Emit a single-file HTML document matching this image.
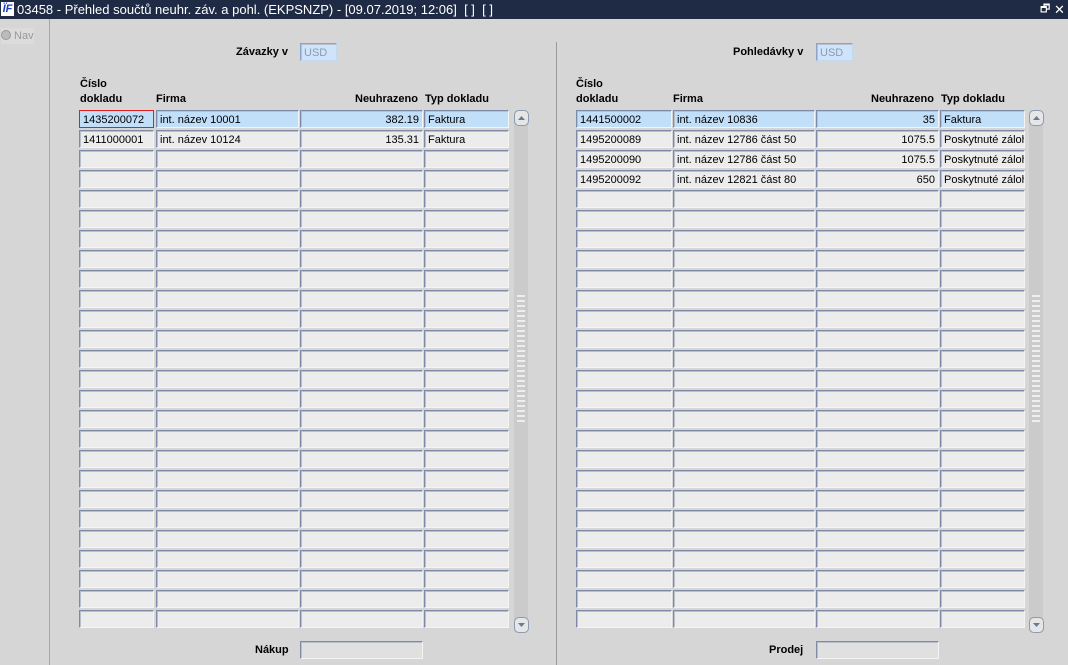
<!DOCTYPE html>
<html><head><meta charset="utf-8"><style>
body{margin:0;width:1068px;height:665px;background:#d6d6d6;font-family:"Liberation Sans",Arial,sans-serif;font-size:11px;position:relative;overflow:hidden}
.t{position:absolute;left:0;top:0;width:1068px;height:19px;background:#1f2b45;color:#fff;font-size:13px;line-height:19px}
.a{position:absolute}
.c{position:absolute;height:16px;background:#ececec;border:1px solid;border-color:#7d8ba6 #f4f4f4 #f4f4f4 #7d8ba6;box-shadow:inset 1px 1px 0 #b8c0cf;line-height:18px;padding:0 3px;box-sizing:content-box;white-space:nowrap;overflow:hidden;color:#000}
.s{background:#c2dffa}
.r{text-align:right}
.h{position:absolute;font-weight:bold;font-size:11px}
.sb{position:absolute;width:14px;background:#cbcbcb;border-radius:3px}
.sbtn{position:absolute;width:13px;height:14px;border:1px solid #8c9ab2;border-radius:5px;background:#e6e6e6;left:0}
</style></head><body>
<div class="t"><span style="position:absolute;left:1px;top:2px;width:13px;height:14px;background:#fff;color:#1a3cc0;font-weight:bold;font-style:italic;font-size:11px;line-height:14px;text-align:center">ÏF</span><span style="position:absolute;left:17px">03458 - Přehled součtů neuhr. záv. a pohl. (EKPSNZP) - [09.07.2019; 12:06]&nbsp; [ ]&nbsp; [ ]</span><span style="position:absolute;left:1040px;font-size:11px">🗗</span><span style="position:absolute;left:1054px;font-size:13px">✕</span></div>
<div class="a" style="left:0;top:19px;width:49px;height:646px;background:#d6d6d6;border-right:1px solid #a8a8a8"></div>
<div class="a" style="left:1px;top:28px;width:33px;height:16px;background:#dcdcdc;color:#999;font-size:11px;line-height:16px;white-space:nowrap"><span style="display:inline-block;width:8px;height:8px;border-radius:50%;border:1px solid #999;background:#bbb;vertical-align:-1px"></span>&nbsp;Nav</div>
<div class="a" style="left:556px;top:42px;width:1px;height:623px;background:#9a9a9a"></div>

<div class="h" style="left:236px;top:46px">Závazky v</div>
<div class="c" style="left:300px;top:43px;width:29px;color:#8a9ab8;border-color:#8fa3c8 #c0d8f0 #c0d8f0 #8fa3c8;background:#cfe4f8">USD</div>
<div class="h" style="left:733px;top:46px">Pohledávky v</div>
<div class="c" style="left:816px;top:43px;width:29px;color:#8a9ab8;border-color:#8fa3c8 #c0d8f0 #c0d8f0 #8fa3c8;background:#cfe4f8">USD</div>

<div class="h" style="left:80px;top:78px">Číslo</div>
<div class="h" style="left:80px;top:93px">dokladu</div>
<div class="h" style="left:156px;top:93px">Firma</div>
<div class="h" style="left:355px;top:93px">Neuhrazeno</div>
<div class="h" style="left:425px;top:93px">Typ dokladu</div>
<div class="h" style="left:576px;top:78px">Číslo</div>
<div class="h" style="left:576px;top:93px">dokladu</div>
<div class="h" style="left:673px;top:93px">Firma</div>
<div class="h" style="left:871px;top:93px">Neuhrazeno</div>
<div class="h" style="left:941px;top:93px">Typ dokladu</div>

<div id="g"></div>

<div class="c s" style="left:79px;top:110px;width:67px;border:1px solid #e02020;box-shadow:none">1435200072</div>
<div class="c s" style="left:156px;top:110px;width:135px">int. název 10001</div>
<div class="c s r" style="left:300px;top:110px;width:115px">382.19</div>
<div class="c s" style="left:424px;top:110px;width:77px">Faktura</div>
<div class="c" style="left:79px;top:130px;width:67px">1411000001</div>
<div class="c" style="left:156px;top:130px;width:135px">int. název 10124</div>
<div class="c r" style="left:300px;top:130px;width:115px">135.31</div>
<div class="c" style="left:424px;top:130px;width:77px">Faktura</div>

<div class="c s" style="left:576px;top:110px;width:88px">1441500002</div>
<div class="c s" style="left:673px;top:110px;width:134px">int. název 10836</div>
<div class="c s r" style="left:816px;top:110px;width:115px">35</div>
<div class="c s" style="left:940px;top:110px;width:77px">Faktura</div>
<div class="c" style="left:576px;top:130px;width:88px">1495200089</div>
<div class="c" style="left:673px;top:130px;width:134px">int. název 12786 část 50</div>
<div class="c r" style="left:816px;top:130px;width:115px">1075.5</div>
<div class="c" style="left:940px;top:130px;width:77px">Poskytnuté záloh</div>
<div class="c" style="left:576px;top:150px;width:88px">1495200090</div>
<div class="c" style="left:673px;top:150px;width:134px">int. název 12786 část 50</div>
<div class="c r" style="left:816px;top:150px;width:115px">1075.5</div>
<div class="c" style="left:940px;top:150px;width:77px">Poskytnuté záloh</div>
<div class="c" style="left:576px;top:170px;width:88px">1495200092</div>
<div class="c" style="left:673px;top:170px;width:134px">int. název 12821 část 80</div>
<div class="c r" style="left:816px;top:170px;width:115px">650</div>
<div class="c" style="left:940px;top:170px;width:77px">Poskytnuté záloh</div>

<div class="sb" style="left:514px;top:110px;height:523px"><div class="sbtn" style="top:0"><svg width="13" height="14"><path d="M3 9h7L6.5 5z" fill="#6a7a96"/></svg></div><div class="sbtn" style="bottom:0"><svg width="13" height="14"><path d="M3 5h7L6.5 9z" fill="#6a7a96"/></svg></div><div style="position:absolute;left:3px;top:182px;width:8px;height:130px;background:repeating-linear-gradient(#cbcbcb 0 3px,#eee 3px 5px)"></div></div>
<div class="sb" style="left:1029px;top:110px;height:523px"><div class="sbtn" style="top:0"><svg width="13" height="14"><path d="M3 9h7L6.5 5z" fill="#6a7a96"/></svg></div><div class="sbtn" style="bottom:0"><svg width="13" height="14"><path d="M3 5h7L6.5 9z" fill="#6a7a96"/></svg></div><div style="position:absolute;left:3px;top:182px;width:8px;height:130px;background:repeating-linear-gradient(#cbcbcb 0 3px,#eee 3px 5px)"></div></div>

<div class="h" style="left:255px;top:644px">Nákup</div>
<div class="c" style="left:300px;top:641px;width:115px;background:#e0e0e0"></div>
<div class="h" style="left:769px;top:644px">Prodej</div>
<div class="c" style="left:816px;top:641px;width:115px;background:#e0e0e0"></div>

<script>
var g=document.getElementById('g'),h='';
var L=[[79,67],[156,135],[300,115],[424,77]],R=[[576,88],[673,134],[816,115],[940,77]];
for(var i=0;i<26;i++){var y=110+i*20;
 if(i>=2)L.forEach(function(c){h+='<div class="c" style="left:'+c[0]+'px;top:'+y+'px;width:'+c[1]+'px"></div>'});
 if(i>=4)R.forEach(function(c){h+='<div class="c" style="left:'+c[0]+'px;top:'+y+'px;width:'+c[1]+'px"></div>'});}
g.innerHTML=h;
</script>
</body></html>
